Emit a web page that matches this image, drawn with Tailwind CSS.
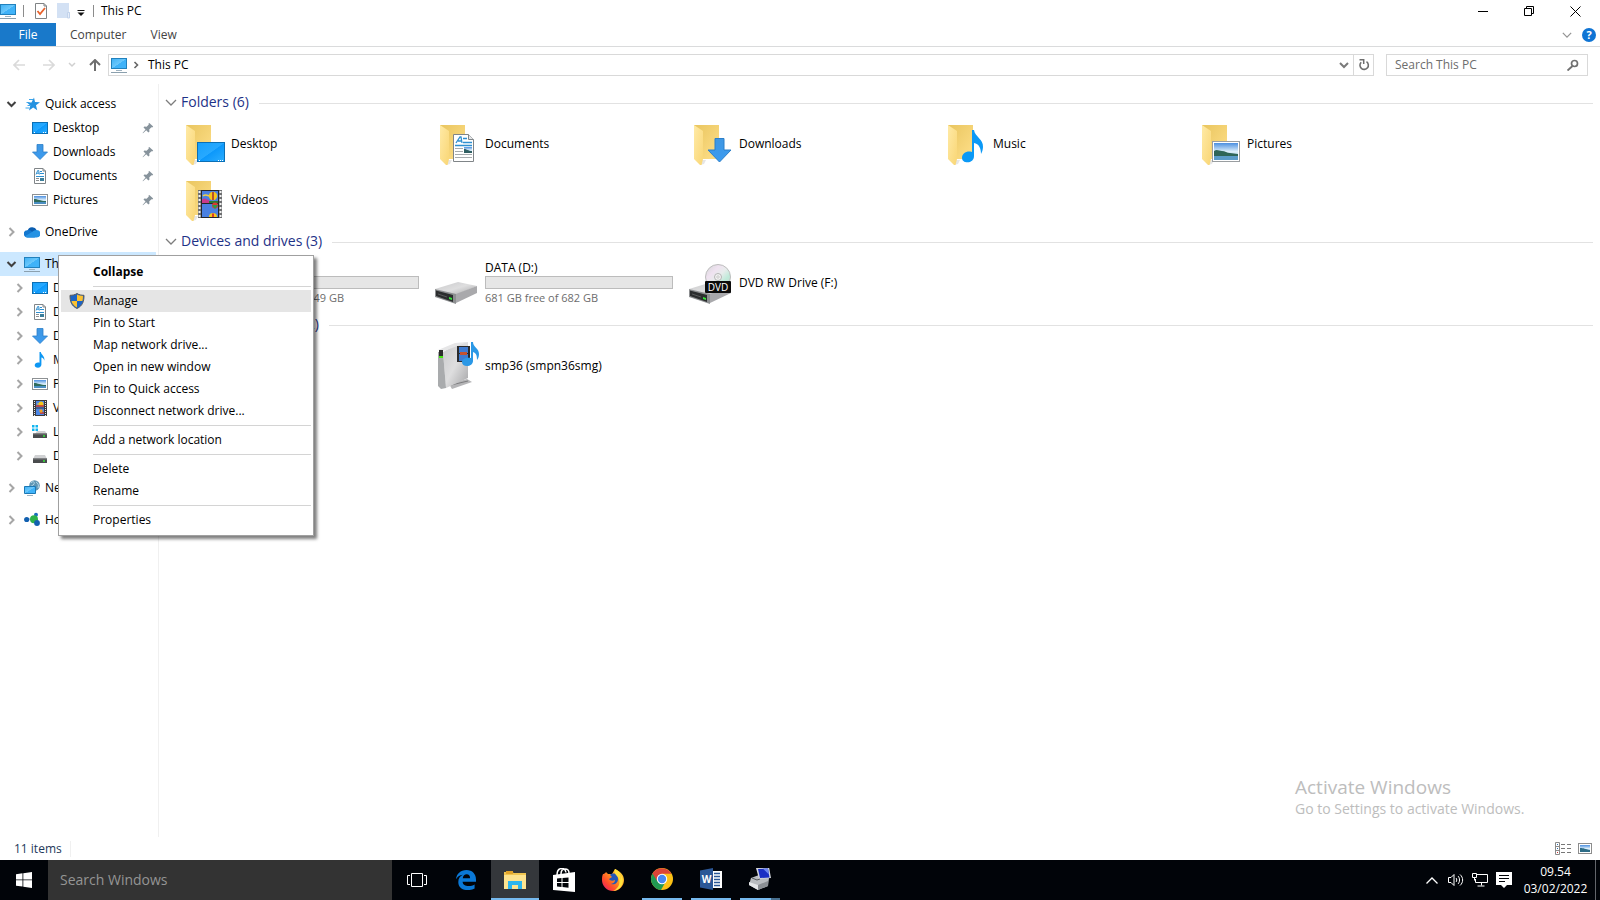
<!DOCTYPE html>
<html lang="en">
<head>
  <meta charset="UTF-8">
  <meta name="viewport" content="width=device-width, initial-scale=1">
  <title>This PC</title>
  <script src="https://cdn.jsdelivr.net/npm/@tailwindcss/browser@4"></script>
</head>
<body class="h-screen flex flex-col overflow-hidden bg-white text-black text-[12px] leading-4 font-['Open_Sans','Noto_Sans',sans-serif]">

  <!-- Icon sprite -->
  <svg class="absolute w-0 h-0" aria-hidden="true">
    <defs>
      <linearGradient id="screen" x1="0" y1="0" x2="1" y2="1"><stop offset="0" stop-color="#3db0f5"/><stop offset=".5" stop-color="#6cc8fb"/><stop offset=".52" stop-color="#3fb2f8"/><stop offset="1" stop-color="#41b4fa"/></linearGradient>
      <linearGradient id="desk" x1="0" y1="0" x2="1" y2="1"><stop offset="0" stop-color="#16a0fb"/><stop offset=".5" stop-color="#27a9ff"/><stop offset=".52" stop-color="#0c98fb"/><stop offset="1" stop-color="#2caeff"/></linearGradient>
      <linearGradient id="fback" x1="0" y1="0" x2="1" y2="1"><stop offset="0" stop-color="#e9c55f"/><stop offset="1" stop-color="#ffe08a"/></linearGradient>
      <linearGradient id="fflap" x1="0" y1="0" x2="1" y2="1"><stop offset="0" stop-color="#ffeaa6"/><stop offset="1" stop-color="#f9d675"/></linearGradient>
      <linearGradient id="sky" x1="0" y1="0" x2="0" y2="1"><stop offset="0" stop-color="#4b8fe0"/><stop offset=".5" stop-color="#dceefa"/><stop offset="1" stop-color="#9fc6e6"/></linearGradient>
      <linearGradient id="arrow" x1="0" y1="0" x2="0" y2="1"><stop offset="0" stop-color="#3f97e3"/><stop offset="1" stop-color="#3b9bf0"/></linearGradient>
      <linearGradient id="metal" x1="0" y1="0" x2="1" y2="1"><stop offset="0" stop-color="#c9c9cb"/><stop offset=".5" stop-color="#dededf"/><stop offset="1" stop-color="#a4a4a6"/></linearGradient>
      <linearGradient id="disc" x1="0" y1="0" x2="1" y2="1"><stop offset="0" stop-color="#d2d6d6"/><stop offset=".3" stop-color="#efe2f0"/><stop offset=".5" stop-color="#e8ecec"/><stop offset=".7" stop-color="#bfead9"/><stop offset="1" stop-color="#cfcfcf"/></linearGradient>
      <linearGradient id="fox" x1="1" y1="0" x2="0" y2="1"><stop offset="0" stop-color="#fff04a"/><stop offset=".4" stop-color="#ff9a1e"/><stop offset=".7" stop-color="#ff4a2c"/><stop offset="1" stop-color="#e4127a"/></linearGradient>
    </defs>
    <symbol id="pc" viewBox="0 0 16 16"><rect x=".5" y="1.5" width="15" height="10" fill="url(#screen)" stroke="#2181bd"/><path d="M5 13.5h6" stroke="#9fb3c0"/><path d="M0 15.5h16" stroke="#8ba0ae"/></symbol>
    <symbol id="desktop" viewBox="0 0 16 16"><rect x=".5" y="2.5" width="15" height="11" fill="url(#desk)" stroke="#0b6fb5"/><path d="M2 12.5h1M11 12.5h1M13 12.5h1" stroke="#fff"/></symbol>
    <symbol id="downloads" viewBox="0 0 16 16"><path d="M5 .5h6v7.500h4.500L8 15.500.5 8H5z" fill="url(#arrow)" stroke="#2b7fc9" stroke-width=".8"/></symbol>
    <symbol id="documents" viewBox="0 0 16 16"><path d="M2.500.5h8.500l2.500 2.500v12.500h-11z" fill="#fff" stroke="#808588"/><path d="M11 .5V3h2.500" fill="none" stroke="#808588"/><path d="M4 6.500 5.700 2.500h1l.6 4M5 5.200h2M8 3.500h2M8 5.500h4M4 8.500h8" fill="none" stroke="#2e8fd0"/><path d="M4 10.500h3M4 12.500h3" stroke="#8a8f92"/><path d="M8 10h4v3H8z" fill="#3c7e9a"/></symbol>
    <symbol id="pictures" viewBox="0 0 16 16"><rect x=".5" y="2.500" width="15" height="11" fill="#fff" stroke="#8d9194"/><rect x="2" y="4" width="12" height="8" fill="url(#sky)"/><path d="M2 7c4 0 6 2 12 2v1H2z" fill="#2f6b5c"/><path d="M2 10h12v2H2z" fill="#4a8ec2"/></symbol>
    <symbol id="music" viewBox="0 0 16 16"><path d="M7.500 0h1.300c.4 3 4.400 4 3.500 8.800-.3-1.800-1.500-2.900-2.900-3.200v6.900c0 1.900-1.500 3.200-3.500 3.200-1.900 0-3.200-.9-3.200-2.400 0-1.800 2.300-3.200 4.800-2.500z" fill="#0d97f3"/></symbol>
    <symbol id="videos" viewBox="0 0 16 16"><path d="M1 0h14v16H1z" fill="#3b3b3d"/><path d="M2.500 1v15M13.500 1v15" stroke="#e8e8e8" stroke-dasharray="1 1"/><path d="M4 1h8v6.500H4zM4 8.500h8V15H4z" fill="#4a86e8"/><circle cx="9" cy="4" r="2.500" fill="#f5c518"/><path d="M4 6h8M8 13h4" stroke="#c9342e" stroke-width="1.500"/><circle cx="9" cy="11" r="1.700" fill="#f0a020"/><path d="M5 4h2" stroke="#e8c84a"/></symbol>
    <symbol id="drive" viewBox="0 0 16 16"><path d="M3 7h10l2 4H1z" fill="#d0d1d3"/><path d="M1 10.500h14V15H1z" fill="#494b4d"/><path d="M1 10.500h14v1H1z" fill="#77797b"/><circle cx="12" cy="13" r="1" fill="#35e83a"/></symbol>
    <symbol id="windrive" viewBox="0 0 16 16"><path d="M5 7h8l2 3H3z" fill="#d0d1d3"/><path d="M1 9.500h14V14H1z" fill="#494b4d"/><path d="M1 9.500h14v1H1z" fill="#77797b"/><circle cx="12" cy="12" r="1" fill="#35e83a"/><path d="M0 1h2.500v2.500H0zM3.500 1H6v2.500H3.500zM0 4.500h2.500V7H0zM3.500 4.500H6V7H3.500z" fill="#12b5f0"/></symbol>
    <symbol id="network" viewBox="0 0 16 16"><circle cx="10.500" cy="5.500" r="5.300" fill="#5f95b3"/><path d="M7 3c2-2.500 4-1 3 1s-3 1-3 3M12 2c2 1 3 3 2 6" fill="none" stroke="#b5d8e8"/><path d="M.5 6.500h11v7H.5z" fill="url(#screen)" stroke="#1b78b4"/><path d="M3 15.500h6" stroke="#9fb3c0"/></symbol>
    <symbol id="homegroup" viewBox="0 0 16 16"><path d="M3 7h7l2-5-2 5 3 4" fill="none" stroke="#8ab8d8"/><circle cx="2.700" cy="7.500" r="2.600" fill="#1260b0"/><circle cx="12" cy="2.800" r="2" fill="#1a6cbd"/><circle cx="10" cy="7.300" r="4" fill="#2eb24a"/><circle cx="13" cy="11" r="2.900" fill="#1260b0"/></symbol>
    <symbol id="onedrive" viewBox="0 0 16 16"><path d="M3.500 7a4.900 4.900 0 0 1 9.200-.8L9 10z" fill="#0a5db0"/><path d="M3.500 13.500A3.600 3.600 0 0 1 3.300 6.300c2-.6 3.500.3 4.700 1.500l3 5.700z" fill="#1377cf"/><path d="M12.500 6a3.700 3.700 0 0 1 .2 7.500H3.300A3.300 3.300 0 0 1 .8 12.200L8 8c1.300-1.300 2.800-2 4.500-2z" fill="#2592e3"/></symbol>
    <symbol id="star" viewBox="0 0 16 16"><path d="m10 1.500 1 4.600 5 .1-4 3 1.200 5-4-2.700L5 14.500l1.300-5L3 6.500h4.500z" fill="#2592e0"/><path d="M5 3.500h4M2.500 6.500h3M3.500 9.500h3M1.500 12h4" stroke="#3fa6ea"/></symbol>
    <symbol id="pin" viewBox="0 0 12 12"><path d="m7.300 1 3.900 3.600-1 .9-.8-.3L7.200 7.400l.3 2-1.100 1L4.200 8.200 1 11.300l-.4-.4 2.900-3.300-2-2 .9-1 2.200.2 2.200-2.200-.4-.8z" fill="#87939c"/></symbol>
    <symbol id="right" viewBox="0 0 16 16"><path d="m5.500 4 4 4-4 4" fill="none" stroke="#a6a6a6" stroke-width="2"/></symbol>
    <symbol id="down" viewBox="0 0 16 16"><path d="m3.500 6 4 4 4-4" fill="none" stroke="#404040" stroke-width="2"/></symbol>
    <symbol id="thindown" viewBox="0 0 12 12"><path d="m1 3 5 5 5-5" fill="none" stroke="#7d7d7d" stroke-width="1.300"/></symbol>
    <symbol id="folder" viewBox="0 0 48 48"><path d="M3 5h25v34H3z" fill="url(#fback)"/><path d="m9 45 4-1 2-4h-4z" fill="#e6e6e6"/><path d="m3 5 9 6v28l-1.500 6H9l-6-6z" fill="url(#fflap)"/></symbol>
    <symbol id="bigdrive" viewBox="0 0 48 48" class="overflow-visible"><path d="m-2 30 23-7 19 4-21 9z" fill="url(#metal)"/><path d="M40 27v7l-21 10v-9z" fill="#a9a9ac"/><path d="m-2 30 21 5v10L-2 38z" fill="#8d8f91"/><path d="m-1 31.500 17 4.500v7L-1 37z" fill="#2b2d2e"/><path d="m1 35 9 3" stroke="#565859"/><path d="m12 38 3 1v2l-3-1z" fill="#36e53b"/></symbol>
  </svg>

  <!-- Title bar -->
  <header class="flex h-[23px] shrink-0 items-center pb-px">
    <svg class="size-4"><use href="#pc"/></svg>
    <span class="ml-[7px] h-3 w-px bg-[#8c8c8c]"></span>
    <button class="ml-2 w-[18px] flex justify-center" aria-label="Properties">
      <svg class="w-3 h-4" viewBox="0 0 12 16"><path d="M.5.5H9L11.500 3v12.500H.5z" fill="#fff" stroke="#7f8385"/><path d="M9 .5V3h2.500" fill="none" stroke="#7f8385"/><path d="m2.500 8 2.500 3 5-6" fill="none" stroke="#e8622c" stroke-width="1.800"/></svg>
    </button>
    <button class="ml-1 w-[18px] flex justify-center" aria-label="New folder">
      <svg class="w-[13px] h-4" viewBox="0 0 13 16"><path d="M0 0h12v9h1v6H0z" fill="#d3e1f4"/><path d="M10.500 9.500h2v5.500h-2z" fill="#e6eefa" stroke="#c2d3eb"/></svg>
    </button>
    <button class="ml-1 w-[10px] flex justify-center" aria-label="Customize Quick Access Toolbar">
      <svg class="w-[8px] h-[8px] mt-1" viewBox="0 0 8 8"><path d="M.5 1.500h7" stroke="#111"/><path d="M.5 3.500h7L4 7z" fill="#111"/></svg>
    </button>
    <span class="mx-[7px] h-3 w-px bg-[#8c8c8c]"></span>
    <h1 class="grow">This PC</h1>
    <div class="flex pr-[2px] h-full">
      <button class="w-[46px] flex items-center justify-center" aria-label="Minimize"><svg class="size-[11px]" viewBox="0 0 11 11"><path d="M0 5.500h10" stroke="#000"/></svg></button>
      <button class="w-[46px] flex items-center justify-center" aria-label="Restore"><svg class="size-[11px]" viewBox="0 0 11 11"><path d="M.5 2.500h7v7h-7zM2.500 2.500v-2h7v7h-2" fill="none" stroke="#000"/></svg></button>
      <button class="w-[46px] flex items-center justify-center" aria-label="Close"><svg class="size-[11px]" viewBox="0 0 11 11"><path d="m.5.5 10 10m0-10-10 10" stroke="#000"/></svg></button>
    </div>
  </header>

  <!-- Ribbon tabs -->
  <div class="flex h-6 shrink-0 items-stretch border-b border-[#dadbdc] text-[#444]">
    <button class="mr-[2px] w-14 bg-[#1979ca] text-white">File</button>
    <button class="px-3">Computer</button>
    <button class="px-3">View</button>
    <div class="ml-auto flex items-center gap-[10px] pr-1">
      <button class="w-[10px]" aria-label="Expand the Ribbon"><svg class="size-[10px]" viewBox="0 0 12 12"><path d="m1 3.500 5 5 5-5" fill="none" stroke="#949494" stroke-width="1.500"/></svg></button>
      <button class="size-[14px] rounded-full bg-[#0f74d4] text-white text-[11px] leading-[14px] font-bold" aria-label="Help">?</button>
    </div>
  </div>

  <!-- Address bar -->
  <div class="flex h-[37px] shrink-0 items-center pb-[2px] pr-3">
    <button class="w-[38px] flex justify-center" aria-label="Back"><svg class="size-3" viewBox="0 0 12 12"><path d="M12 6H1m5-5L1 6l5 5" fill="none" stroke="#dadada" stroke-width="1.700"/></svg></button>
    <button class="w-[22px] flex justify-center" aria-label="Forward"><svg class="size-3" viewBox="0 0 12 12"><path d="M0 6h11M6 1l5 5-5 5" fill="none" stroke="#dadada" stroke-width="1.700"/></svg></button>
    <button class="w-6 flex justify-center" aria-label="Recent locations"><svg class="size-2" viewBox="0 0 8 8"><path d="m1 2 3 3 3-3" fill="none" stroke="#d0d0d0" stroke-width="1.500"/></svg></button>
    <button class="w-[22px] mr-[2px] flex justify-center" aria-label="Up"><svg class="size-3" viewBox="0 0 12 12"><path d="M6 12V1M1 6l5-5 5 5" fill="none" stroke="#6e6e6e" stroke-width="2"/></svg></button>
    <div class="flex grow h-[22px] items-center border border-[#d9d9d9]">
      <svg class="ml-[2px] size-4"><use href="#pc"/></svg>
      <svg class="ml-1 size-3" viewBox="0 0 12 12"><path d="m3.500 3 3 3-3 3" fill="none" stroke="#666" stroke-width="1.600"/></svg>
      <a href="#" class="ml-[5px] grow">This PC</a>
      <button class="w-5 flex justify-center" aria-label="Previous locations"><svg class="size-3" viewBox="0 0 12 12"><path d="m3 4 4 4 4-4" fill="none" stroke="#7a7a7a" stroke-width="2"/></svg></button>
      <button class="w-5 h-full flex items-center justify-center border-l border-[#d9d9d9]" aria-label="Refresh"><svg class="size-3" viewBox="0 0 12 12"><path d="M8.500 2.700A4.200 4.200 0 1 1 3.200 3.200" fill="none" stroke="#6e6e6e" stroke-width="1.600"/><path d="M1.500.8h4.200V5" fill="none" stroke="#6e6e6e" stroke-width="1.500"/></svg></button>
    </div>
    <form class="ml-3 flex w-[202px] h-[22px] items-center border border-[#d9d9d9]">
      <input type="text" aria-label="Search This PC" placeholder="Search This PC" class="w-0 grow pl-2 outline-none placeholder:text-[#6d6d6d]">
      <button class="mr-2 w-3" aria-label="Search"><svg class="size-3" viewBox="0 0 12 12"><circle cx="7.500" cy="4.500" r="3" fill="none" stroke="#707070" stroke-width="1.700"/><path d="m5.500 7-5 4.500" stroke="#707070" stroke-width="1.900"/></svg></button>
    </form>
  </div>

  <div class="relative flex grow min-h-0">

    <!-- Navigation pane -->
    <nav class="w-[159px] shrink-0 border-r border-[#f0f0f0] pt-2 whitespace-nowrap">
      <ul class="pr-[2px]">
        <li class="flex h-6 items-center pl-1"><svg class="size-4"><use href="#down"/></svg><svg class="ml-1 mr-[5px] size-4"><use href="#star"/></svg><a href="#">Quick access</a></li>
        <li class="flex h-6 items-center pl-8"><svg class="mr-[5px] size-4"><use href="#desktop"/></svg><a href="#" class="grow">Desktop</a><svg class="mr-[2px] size-3"><use href="#pin"/></svg></li>
        <li class="flex h-6 items-center pl-8"><svg class="mr-[5px] size-4"><use href="#downloads"/></svg><a href="#" class="grow">Downloads</a><svg class="mr-[2px] size-3"><use href="#pin"/></svg></li>
        <li class="flex h-6 items-center pl-8"><svg class="mr-[5px] size-4"><use href="#documents"/></svg><a href="#" class="grow">Documents</a><svg class="mr-[2px] size-3"><use href="#pin"/></svg></li>
        <li class="flex h-6 items-center pl-8"><svg class="mr-[5px] size-4"><use href="#pictures"/></svg><a href="#" class="grow">Pictures</a><svg class="mr-[2px] size-3"><use href="#pin"/></svg></li>
        <li class="mt-2 flex h-6 items-center pl-1"><svg class="size-4"><use href="#right"/></svg><svg class="ml-1 mr-[5px] size-4"><use href="#onedrive"/></svg><a href="#">OneDrive</a></li>
        <li class="mt-2 flex h-6 items-center pl-1 bg-[#cce8ff]"><svg class="size-4"><use href="#down"/></svg><svg class="ml-1 mr-[5px] size-4"><use href="#pc"/></svg><a href="#">This PC</a></li>
        <li class="flex h-6 items-center pl-3"><svg class="size-4"><use href="#right"/></svg><svg class="ml-1 mr-[5px] size-4"><use href="#desktop"/></svg><a href="#">Desktop</a></li>
        <li class="flex h-6 items-center pl-3"><svg class="size-4"><use href="#right"/></svg><svg class="ml-1 mr-[5px] size-4"><use href="#documents"/></svg><a href="#">Documents</a></li>
        <li class="flex h-6 items-center pl-3"><svg class="size-4"><use href="#right"/></svg><svg class="ml-1 mr-[5px] size-4"><use href="#downloads"/></svg><a href="#">Downloads</a></li>
        <li class="flex h-6 items-center pl-3"><svg class="size-4"><use href="#right"/></svg><svg class="ml-1 mr-[5px] size-4"><use href="#music"/></svg><a href="#">Music</a></li>
        <li class="flex h-6 items-center pl-3"><svg class="size-4"><use href="#right"/></svg><svg class="ml-1 mr-[5px] size-4"><use href="#pictures"/></svg><a href="#">Pictures</a></li>
        <li class="flex h-6 items-center pl-3"><svg class="size-4"><use href="#right"/></svg><svg class="ml-1 mr-[5px] size-4"><use href="#videos"/></svg><a href="#">Videos</a></li>
        <li class="flex h-6 items-center pl-3"><svg class="size-4"><use href="#right"/></svg><svg class="ml-1 mr-[5px] size-4"><use href="#windrive"/></svg><a href="#">Local Disk (C:)</a></li>
        <li class="flex h-6 items-center pl-3"><svg class="size-4"><use href="#right"/></svg><svg class="ml-1 mr-[5px] size-4"><use href="#drive"/></svg><a href="#">DATA (D:)</a></li>
        <li class="mt-2 flex h-6 items-center pl-1"><svg class="size-4"><use href="#right"/></svg><svg class="ml-1 mr-[5px] size-4"><use href="#network"/></svg><a href="#">Network</a></li>
        <li class="mt-2 flex h-6 items-center pl-1"><svg class="size-4"><use href="#right"/></svg><svg class="ml-1 mr-[5px] size-4"><use href="#homegroup"/></svg><a href="#">Homegroup</a></li>
      </ul>
    </nav>

    <!-- Items -->
    <main class="grow min-w-0 pt-[6px] pl-[6px] pr-[7px]">
      <section>
        <div class="flex h-[26px] items-center">
          <svg class="mr-1 size-3"><use href="#thindown"/></svg>
          <h2 class="pb-[2px] text-[14px] text-[#1e3287]">Folders (6)</h2>
          <span class="ml-[10px] grow h-px bg-[#e2e2e2]"></span>
        </div>
        <div class="grid grid-cols-[repeat(auto-fill,254px)] pl-[18px]">
          <a href="#" class="flex h-14 items-center">
            <svg class="size-12" viewBox="0 0 48 48"><use href="#folder"/><rect x="14.500" y="22.500" width="27" height="19" fill="url(#desk)" stroke="#0b6fb5"/><path d="M16 40.500h1M35 40.500h1M37 40.500h1M39 40.500h1" stroke="#fff"/></svg>
            Desktop
          </a>
          <a href="#" class="flex h-14 items-center">
            <svg class="size-12" viewBox="0 0 48 48"><use href="#folder"/><path d="M16.500 14.500h15l5 5v22h-20z" fill="#fff" stroke="#808588"/><path d="M31.500 14.500v5h5" fill="#e4e6e8" stroke="#808588"/><path d="m19 23 4-6h1l1 6m-4-2h4M26 18.500h4M26 22.500h9M18 25.500h17" fill="none" stroke="#2e8fd0" stroke-width="1.300"/><path d="M18 28.500h8M18 31.500h8M18 34.500h17M18 37.500h17" stroke="#a7abae"/><path d="M27 27h8v6h-8z" fill="url(#sky)"/><path d="M27 29c3 0 4 2 8 2v2h-8z" fill="#2f5f62"/></svg>
            Documents
          </a>
          <a href="#" class="flex h-14 items-center">
            <svg class="size-12" viewBox="0 0 48 48"><use href="#folder"/><path d="M24 18.500h9V30h7L28.500 42 17 30h7z" fill="url(#arrow)" stroke="#2b7fc9"/></svg>
            Downloads
          </a>
          <a href="#" class="flex h-14 items-center">
            <svg class="size-12" viewBox="0 0 48 48"><use href="#folder"/><path d="M27 10h2c1 7 9.500 9 9 17-.1 3-1 5-2 7 0-6-2-10-7-11v13c0 4-3 6.300-6.500 6.300-3.400 0-5.500-1.800-5.500-4.600 0-4.400 5-7.400 10-5.700z" fill="#0b99f6"/></svg>
            Music
          </a>
          <a href="#" class="flex h-14 items-center">
            <svg class="size-12" viewBox="0 0 48 48"><use href="#folder"/><rect x="13.500" y="21.500" width="27" height="20" fill="#fff" stroke="#9a9ea1"/><rect x="15" y="23" width="24" height="17" fill="url(#sky)"/><path d="M15 31c3-2 5 0 8 0s5 2 8 2 5 1 8 1v2H15z" fill="#2f6658"/><path d="M15 36h24v4H15z" fill="#5b9cc9"/></svg>
            Pictures
          </a>
          <a href="#" class="flex h-14 items-center">
            <svg class="size-12" viewBox="0 0 48 48"><use href="#folder"/><path d="M15 14h24v28H15z" fill="#6d6e70"/><path d="M16.500 15v26M37.500 15v26" stroke="#f2f2f2" stroke-width="2" stroke-dasharray="2 2"/><path d="M18 14h18v28H18z" fill="#252628"/><path d="M19 15h16v12H19zM19 28h16v13H19z" fill="#4a80e0"/><path d="M19 24c2-3 4-1 8 1v2h-8z" fill="#c93a8a"/><path d="M26 25h9v2h-9z" fill="#2b7a34"/><circle cx="30" cy="20" r="4.200" fill="#f6c51b"/><path d="M29 16h2v8h-2z" fill="#b9522a"/><path d="M20 20c2-2 4-1 6 0" fill="none" stroke="#efce4a" stroke-width="1.500"/><circle cx="32" cy="29.500" r="3" fill="#d93a32"/><path d="M29 29h6l-3 4z" fill="#2c9b48"/><path d="M26 41a4 4 0 0 1 8 0z" fill="#f6c51b"/><path d="M29 37.500h2V41h-2z" fill="#d93a32"/></svg>
            Videos
          </a>
        </div>
      </section>

      <section class="mt-px">
        <div class="flex h-[26px] items-center">
          <svg class="mr-1 size-3"><use href="#thindown"/></svg>
          <h2 class="pb-[2px] text-[14px] text-[#1e3287]">Devices and drives (3)</h2>
          <span class="ml-[10px] grow h-px bg-[#e2e2e2]"></span>
        </div>
        <div class="grid grid-cols-[repeat(auto-fill,254px)] pl-[18px]">
          <a href="#" class="flex h-14 items-center">
            <svg class="size-12 overflow-visible"><use href="#bigdrive"/></svg>
            <span class="w-[188px]"><span class="block leading-[17px]">Local Disk (C:)</span><span class="block h-[13px] border border-[#bcbcbc] bg-[#e6e6e6]"></span><span class="block text-[11px] leading-[18px] text-[#6d6d6d]">117 GB free of 149 GB</span></span>
          </a>
          <a href="#" class="flex h-14 items-center">
            <svg class="size-12 overflow-visible"><use href="#bigdrive"/></svg>
            <span class="w-[188px]"><span class="block leading-[17px]">DATA (D:)</span><span class="block h-[13px] border border-[#bcbcbc] bg-[#e6e6e6]"></span><span class="block text-[11px] leading-[18px] text-[#6d6d6d]">681 GB free of 682 GB</span></span>
          </a>
          <a href="#" class="flex h-14 items-center">
            <svg class="size-12 overflow-visible" viewBox="0 0 48 48"><use href="#bigdrive"/><circle cx="27" cy="18" r="12.500" fill="url(#disc)" stroke="#bdbdbd"/><circle cx="27" cy="18" r="3.500" fill="#f3f3f3" stroke="#b5b5b5"/><circle cx="27" cy="18" r="1.200" fill="#fff" stroke="#c5c5c5"/><rect x="14" y="22" width="26" height="12" rx="1" fill="#0c0c0c"/><text x="27" y="31.500" text-anchor="middle" font-size="10" fill="#fff">DVD</text></svg>
            DVD RW Drive (F:)
          </a>
        </div>
      </section>

      <section class="mt-px">
        <div class="flex h-[26px] items-center">
          <svg class="mr-1 size-3"><use href="#thindown"/></svg>
          <h2 class="pb-[2px] text-[14px] text-[#1e3287]">Network locations (2)</h2>
          <span class="ml-[10px] grow h-px bg-[#e2e2e2]"></span>
        </div>
        <div class="grid grid-cols-[repeat(auto-fill,254px)] pl-[18px]">
          <a href="#" class="flex h-14 items-center">
            <svg class="size-12 overflow-visible"><use href="#bigdrive"/></svg>
            Network
          </a>
          <a href="#" class="flex h-14 items-center">
            <svg class="size-12" viewBox="0 0 48 48"><path d="m12 42 18-5 5 3-20 7z" fill="#b5b5b7"/><path d="m14 43 17-4" stroke="#7d7d7f"/><path d="M6 10 20 2l11-2v36L9 46z" fill="url(#metal)"/><path d="M1 10h5l3 36-5 1-3-3z" fill="#a9abad"/><path d="M1 8 18 1l13-1L7 9z" fill="#e6e6e7"/><path d="M2 8h4v6H2z" fill="#2b2b2b"/><path d="M2 14h4v2H2z" fill="#43e512"/><path d="M20 4h13v16H20z" fill="#2a2b2d"/><path d="M22 5h9v6h-9zM22 12h9v7h-9z" fill="#3f7bd0"/><path d="M23 10h7v3h-7z" fill="#c5522e"/><path d="M34 0h2c0 5 6 6 6 12 0 3-1 5-2 6 0-5-1-7-4-8v9c0 3-3 5-6 5s-5-1.500-5-4c0-3 4-5 9-4z" fill="#2b98e6"/></svg>
            smp36 (smpn36smg)
          </a>
        </div>
      </section>
    </main>

    <!-- Activation watermark -->
    <div class="absolute right-[68px] bottom-[18px] w-[237px] whitespace-nowrap text-[#bdbdbd]">
      <p class="text-[19px] leading-6">Activate Windows</p>
      <p class="text-[14px] leading-5">Go to Settings to activate Windows.</p>
    </div>

    <!-- Context menu -->
    <div role="menu" class="absolute left-[58px] top-[171px] w-64 border border-[#a0a0a0] bg-white pt-[5px] pb-1 px-[2px] shadow-[3px_3px_3px_rgba(0,0,0,0.5)] flex flex-col">
      <button role="menuitem" class="h-[22px] pl-8 text-left font-bold">Collapse</button>
      <hr class="ml-8 my-[3px] border-[#d4d4d4]">
      <button role="menuitem" class="h-[22px] flex items-center bg-[#e5e5e5]">
        <svg class="ml-2 mr-2 size-4" viewBox="0 0 16 16"><path d="M8 .5c2 1.400 4.500 1.800 7 1.800 0 6.500-1.500 10.500-7 13.200C2.500 12.800 1 8.800 1 2.300c2.500 0 5-.4 7-1.800z" fill="#1d64c4" stroke="#5a5a5a"/><path d="M8 1.500c2 1 4 1.400 6 1.500 0 2-.2 3.600-.6 5H8z" fill="#fdc12f"/><path d="M8 8v6.500C4.800 12.800 3.200 10.700 2.500 8z" fill="#fdc12f"/></svg>
        Manage
      </button>
      <button role="menuitem" class="h-[22px] pl-8 text-left">Pin to Start</button>
      <button role="menuitem" class="h-[22px] pl-8 text-left">Map network drive...</button>
      <button role="menuitem" class="h-[22px] pl-8 text-left">Open in new window</button>
      <button role="menuitem" class="h-[22px] pl-8 text-left">Pin to Quick access</button>
      <button role="menuitem" class="h-[22px] pl-8 text-left">Disconnect network drive...</button>
      <hr class="ml-8 my-[3px] border-[#d4d4d4]">
      <button role="menuitem" class="h-[22px] pl-8 text-left">Add a network location</button>
      <hr class="ml-8 my-[3px] border-[#d4d4d4]">
      <button role="menuitem" class="h-[22px] pl-8 text-left">Delete</button>
      <button role="menuitem" class="h-[22px] pl-8 text-left">Rename</button>
      <hr class="ml-8 my-[3px] border-[#d4d4d4]">
      <button role="menuitem" class="h-[22px] pl-8 text-left">Properties</button>
    </div>
  </div>

  <!-- Status bar -->
  <div class="flex h-[23px] shrink-0 items-center pl-[14px] pr-2">
    <span class="pr-2 border-r border-[#f0f0f0] text-[#1e395b]">11 items</span>
    <button class="ml-auto" aria-label="Details view"><svg class="w-4 h-[13px]" viewBox="0 0 16 13"><path d="M.5.5h4v12h-4zM.5 4.500h4M.5 8.500h4" fill="none" stroke="#8a8a8a"/><path d="M2 2.500h1M2 6.500h1" stroke="#2f6fae"/><path d="M2 10.500h1" stroke="#c33"/><path d="M6 2.500h4M12 2.500h4M6 6.500h4M12 6.500h4M6 10.500h4M12 10.500h4" stroke="#777"/></svg></button>
    <button class="ml-[7px]" aria-label="Large thumbnails view"><svg class="w-[14px] h-[11px]" viewBox="0 0 14 11"><rect x=".5" y=".5" width="13" height="10" fill="#fff" stroke="#8d8d8d"/><path d="M2 2h10v7H2z" fill="url(#sky)"/><path d="M2 5c4 0 5 1 10 2v2H2z" fill="#2d6c86"/></svg></button>
  </div>

  <!-- Taskbar -->
  <footer class="flex h-10 shrink-0 items-stretch bg-[#010409] text-white">
    <button class="w-12 flex items-center justify-center" aria-label="Start"><svg class="size-4" viewBox="0 0 16 16"><path d="m0 2.200 6.500-.9v6.200H0zM7.300 1.200 16 0v7.500H7.300zM0 8.300h6.500v6.300L0 13.800zM7.300 8.300H16V16l-8.700-1.300z" fill="#fff"/></svg></button>
    <input type="text" aria-label="Search Windows" placeholder="Search Windows" class="w-[344px] bg-[#333] pl-3 text-[14px] outline-none placeholder:text-[#959595]">
    <div class="flex gap-px pl-px">
      <button class="w-12 flex items-center justify-center" aria-label="Task View"><svg class="w-5 h-[14px]" viewBox="0 0 20 14"><path d="M4.500.5h11v13h-11zM3 2.500H.5v9H3M17 2.500h2.500v9H17" fill="none" stroke="#fff"/></svg></button>
      <button class="w-12 flex items-center justify-center" aria-label="Microsoft Edge"><svg class="size-5" viewBox="0 0 20 20"><path d="M0 9.300C.5 4 4.500 0 10.400 0 16.500 0 20 4.200 20 9.500v2.300H6.600c.2 3 2.800 4.300 6 4.300 2.300 0 4.300-.6 6-1.600v4.100c-2 1-4.300 1.500-7 1.500-5.500 0-9.300-3-9.300-8.200C2.300 8.300 4 6 6.800 4.700 4 5 1.500 6.500 0 9.300zm6.800-1h7.300c0-2.600-1.300-4-3.400-4S7 5.800 6.800 8.300z" fill="#0a78d6"/></svg></button>
      <button class="w-12 flex items-center justify-center border-b-2 border-[#76b9ed] bg-[#34373b] pt-[2px]" aria-label="File Explorer"><svg class="w-[22px] h-[18px]" viewBox="0 0 22 18"><path d="M0 1h8l2 1h12v16H0z" fill="#f0c550"/><path d="M2 0h7v3H2z" fill="#e0a32a"/><path d="M0 4h22v14H0z" fill="#fde38f"/><path d="M4 18v-8h14v8h-4v-4H8v4z" fill="#2cb5ee"/></svg></button>
      <button class="w-12 flex items-center justify-center" aria-label="Store"><svg class="w-[22px] h-6" viewBox="0 0 22 24"><path d="M4 7c0-5 2-6.500 5-6.500 2 0 3.500 1 4 4M8 6c0-4 2-5 4-5s4 1 4 4" fill="none" stroke="#fff" stroke-width="1.500"/><path d="m0 7 22-3v20L0 22z" fill="#fff"/><path d="m4 10.500 4.500-.5v4H4zM9.500 10l6-.6V14h-6zM4 15h4.500v4L4 18.600zM9.500 15h6v4.700l-6-.6z" fill="#010409"/></svg></button>
      <button class="w-12 flex items-center justify-center" aria-label="Firefox"><svg class="size-[22px]" viewBox="0 0 22 22"><path d="M1 5c1 0 2-.5 3-2l2 2 4 0 3-5c4 2 9 5 9 11a11 11 0 0 1-22 0c0-2 0-4 1-6z" fill="url(#fox)"/><path d="M8 6c3-3 8-1 8 4 0 4-3 6-7 5 3-1 4-2 4-4-2 1-5 1-6-1l3-2z" fill="#2458b8"/><path d="M13 0c5 2 6 6 5 11 1-2 1-4 0-6 6 7 2 16-7 17 8-4 8-12 3-16-1-2-2-3-1-6z" fill="#ffe13c"/></svg></button>
      <button class="w-12 flex flex-col items-center" aria-label="Google Chrome"><svg class="my-2 size-[22px]" viewBox="0 0 22 22"><circle cx="11" cy="11" r="11" fill="#fbc116"/><path d="M11 11 1.500 5.500A11 11 0 0 0 10 22l5-9z" fill="#219a52"/><path d="M1.500 5.500A11 11 0 0 1 20.500 5.800H11L6.500 13.500z" fill="#db4437"/><circle cx="11" cy="11" r="5.200" fill="#fff"/><circle cx="11" cy="11" r="4.200" fill="#4688f1"/></svg><span class="h-[2px] w-10 bg-[#76b9ed]"></span></button>
      <button class="w-12 flex flex-col items-center" aria-label="Word"><svg class="my-2 size-[22px]" viewBox="0 0 22 22"><path d="M12 3h10v17H12z" fill="#fff"/><path d="M14 5.500h6M14 8.500h6M14 11.500h6M14 14.500h6M14 17.500h6" stroke="#2b5797" stroke-width="1.300"/><path d="M0 2.500 13 0v22L0 19.500z" fill="#2b5797"/><text x="6.500" y="15" text-anchor="middle" font-size="10" font-weight="700" fill="#fff">W</text></svg><span class="h-[2px] w-10 bg-[#76b9ed]"></span></button>
      <button class="w-12 flex flex-col items-center" aria-label="Computer Management"><svg class="my-2 size-[22px]" viewBox="0 0 22 22"><path d="m2 10 8-3 10 3-1 8-10 4-9-5z" fill="#b9bcc0"/><path d="m0 14 9 3v5l-9-5z" fill="#e4e6e8"/><path d="m9 17 10-4v5L9 22z" fill="#8b8f94"/><path d="m7 0 13-1 2 11-12 1z" fill="#d5d8de"/><path d="m9 1 10-.500 1.500 9-9.500.5z" fill="#1b2fc4"/><path d="m14 .8 5-.3 1 6z" fill="#6c86f0"/><path d="m3 10 5 2 3-1" fill="none" stroke="#55595e"/></svg><span class="flex h-[2px] w-10"><span class="w-[31px] bg-[#76b9ed]"></span><span class="grow bg-[#476f8e]"></span></span></button>
    </div>
    <div class="ml-auto flex items-stretch">
      <button class="w-6 flex items-center justify-center" aria-label="Show hidden icons"><svg class="w-3 h-[7px]" viewBox="0 0 12 7"><path d="m.5 6.500 5.500-5.500 5.500 5.500" fill="none" stroke="#fff" stroke-width="1.300"/></svg></button>
      <button class="w-6 flex items-center justify-center" aria-label="Volume"><svg class="w-4 h-[14px]" viewBox="0 0 16 14"><path d="M.5 4.500H3L6 1.500v11l-3-3H.5zM8 5c1 1 1 3 0 4M10 3c2 2 2 6 0 8M12 1.500c3.500 3 3.500 8 0 11" fill="none" stroke="#fff"/></svg></button>
      <button class="w-6 flex items-center justify-center" aria-label="Network"><svg class="w-4 h-[14px]" viewBox="0 0 16 14"><path d="M5 1.500h10.500v8H3.500V6M9.500 9.500v3M5.500 13h7M.5.500h4v4h-4zM2.500 4.500v3" fill="none" stroke="#fff"/></svg></button>
      <button class="w-6 flex items-center justify-center" aria-label="Action Center"><svg class="size-4" viewBox="0 0 16 16"><path d="M0 0h16v13h-5l-3 3-3-3H0z" fill="#fff"/><path d="M3 3.500h10M3 6.500h10M3 9.500h6" stroke="#010409"/></svg></button>
      <button class="w-[79px] text-center leading-[17px]">09.54<br>03/02/2022</button>
      <button class="w-[5px] border-l border-[#62656a]" aria-label="Show desktop"></button>
    </div>
  </footer>
</body>
</html>
